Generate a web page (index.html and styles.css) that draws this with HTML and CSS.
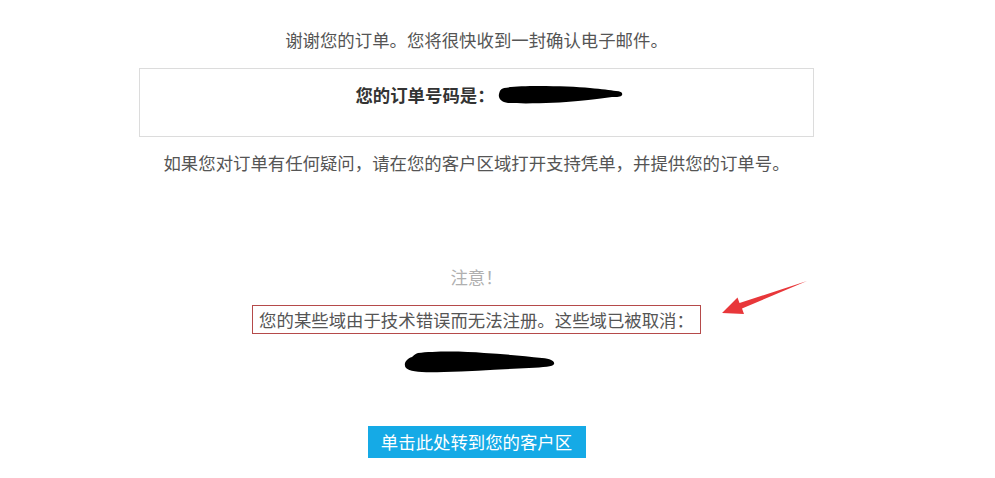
FILE: index.html
```html
<!DOCTYPE html>
<html lang="zh-CN">
<head>
<meta charset="utf-8">
<title>订单确认</title>
<link rel="stylesheet" href="styles.css">
</head>
<body>
<div class="page">
  <main class="column">
    <p class="lead">谢谢您的订单。您将很快收到一封确认电子邮件。</p>
    <div class="order-box">
      <p class="order-line"><span class="order-label">您的订单号码是：</span><svg class="scribble-1" width="126" height="22" viewBox="0 0 126 22"><path d="M6 4 C20 1 70 2 92 4 C104 5 112 6 118 7 C123 7 125 9 124 11 C123 13 119 13 114 13 C104 14 95 16 80 17 C60 19 30 20 10 19 C3 18 0 14 1 10 C2 6 3 5 6 4 Z" fill="#000"/></svg></p>
    </div>
    <p class="help">如果您对订单有任何疑问，请在您的客户区域打开支持凭单，并提供您的订单号。</p>

    <p class="notice-title">注意！</p>
    <div class="notice-row">
      <p class="notice">您的某些域由于技术错误而无法注册。这些域已被取消：</p>
    </div>
    <div class="domains">
      <svg width="152" height="24" viewBox="0 0 152 24"><path d="M14 3 C30 1 60 1 80 3 C100 4 120 6 138 8 C147 9 151 11 150 14 C149 17 140 17 125 18 C100 19 70 21 40 22 C20 23 6 22 2 18 C-1 14 2 9 8 7 C10 5 11 4 14 3 Z" fill="#000"/></svg>
    </div>
    <div class="action">
      <a class="btn" href="#">单击此处转到您的客户区</a>
    </div>
  </main>
  <svg class="arrow" width="100" height="45" viewBox="0 0 100 45"><polygon points="7,38 29,39 27,33.5 92,6 24.5,28 22.5,22.5" fill="#e8373a"/></svg>
</div>
</body>
</html>
```
FILE: styles.css
```css
html, body {
  margin: 0;
  padding: 0;
  background: #fff;
}
body {
  font-family: "Noto Sans CJK SC", "Noto Sans", sans-serif;
  font-size: 17.4px;
  color: #555;
}
.page {
  position: relative;
  width: 995px;
  height: 478px;
  overflow: hidden;
}
.column {
  width: 675px;
  margin-left: 139px;
  padding-top: 28px;
  display: flex;
  flex-direction: column;
  align-items: center;
}
p {
  margin: 0;
  line-height: 24px;
  text-align: center;
}
.lead {
  margin-bottom: 16px;
}
.order-box {
  box-sizing: border-box;
  width: 675px;
  height: 69px;
  border: 1px solid #dcdcdc;
  padding-top: 14px;
}
.order-line {
  display: flex;
  justify-content: center;
  align-items: center;
  padding-left: 26px;
}
.order-label {
  font-weight: bold;
  color: #333;
}
.scribble-1 {
  display: block;
  margin-left: 3px;
}
.help {
  margin-top: 14px;
}
.notice-title {
  margin-top: 90px;
  color: #b0b0b0;
}
.notice-row {
  margin-top: 16px;
}
.notice {
  box-sizing: border-box;
  height: 29px;
  line-height: 27px;
  padding: 0 6px 0 6px;
  border: 1px solid #b54a4a;
}
.domains {
  margin-top: 16px;
  height: 24px;
  margin-left: 7px;
}
.domains svg {
  display: block;
}
.action {
  margin-top: 52px;
}
.btn {
  display: block;
  box-sizing: border-box;
  width: 218px;
  height: 32px;
  line-height: 32px;
  background: #15aae6;
  color: #fff;
  text-align: center;
  text-decoration: none;
}
.arrow {
  position: absolute;
  left: 715px;
  top: 275px;
}
```
